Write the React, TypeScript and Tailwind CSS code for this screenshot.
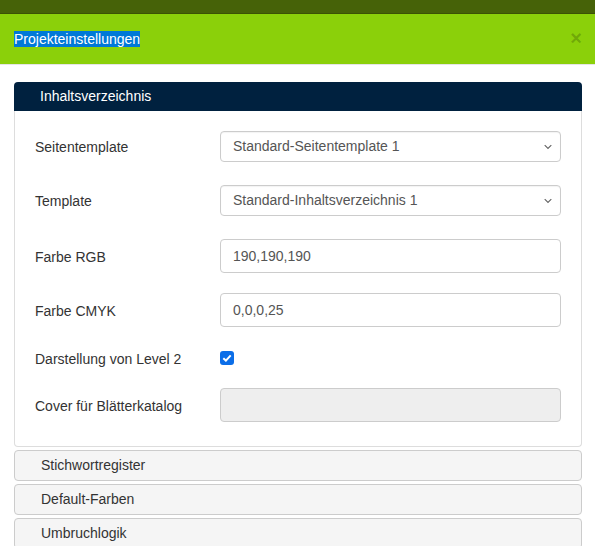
import React from "react";

const Chevron = () => (
  <svg width="8" height="5" viewBox="0 0 8 5" className="absolute right-[8px] top-1/2 -translate-y-1/2 pointer-events-none">
    <path d="M0.7 0.7 L4 4 L7.3 0.7" fill="none" stroke="#666" strokeWidth="1.2" />
  </svg>
);

function SelectBox({ value }: { value: string }) {
  return (
    <div className="relative w-[341px] h-[31px] border border-[#ccc] rounded-[4px] bg-white flex items-center pl-[12px] text-[14px] text-[#555] shadow-[inset_0_1px_1px_rgba(0,0,0,0.05)]">
      {value}
      <Chevron />
    </div>
  );
}

function InputBox({ value, disabled }: { value?: string; disabled?: boolean }) {
  return (
    <div
      className={
        "w-[341px] h-[34px] border border-[#ccc] rounded-[4px] flex items-center pl-[12px] text-[14px] text-[#555] " +
        (disabled ? "bg-[#eeeeee]" : "bg-white")
      }
    >
      {value}
    </div>
  );
}

function Row({ label, children, className }: { label: string; children: React.ReactNode; className?: string }) {
  return (
    <div className={"flex items-center " + (className ?? "")}>
      <div className="w-[185px] text-[14px] text-[#333] pt-[2px]">{label}</div>
      {children}
    </div>
  );
}

function Collapsed({ title }: { title: string }) {
  return (
    <div className="mt-[3px] h-[31px] border border-[#ccc] rounded-[4px] bg-[#f5f5f5] flex items-center pl-[26px] text-[14px] text-[#333]">
      {title}
    </div>
  );
}

export default function App() {
  return (
    <div
      className="w-[595px] h-[546px] overflow-hidden bg-white"
      style={{ fontFamily: '"Liberation Sans", Arial, sans-serif' }}
    >
      <div className="h-[14px] bg-[#466208] border-b border-[#3b5205]" />
      <div className="h-[50px] bg-[#8bd00a] flex items-center justify-between pl-[14px] pr-[13px] border-b border-[#e5e5e5] box-content">
        <span className="bg-[#0078d7] text-white text-[14px] leading-[16px] mt-[-1px]">Projekteinstellungen</span>
        <span className="text-[20px] font-bold leading-none text-black/20 mt-[-2px]">×</span>
      </div>
      <div className="pt-[17px] pl-[14px] pr-[13px]">
        <div className="h-[29px] bg-[#00213f] rounded-t-[4px] flex items-center pl-[26px] text-[14px] text-white">
          Inhaltsverzeichnis
        </div>
        <div className="border border-t-0 border-[#ddd] rounded-b-[4px] pt-[20px] pb-[24px] pl-[20px]">
          <Row label="Seitentemplate" className="h-[31px]">
            <SelectBox value="Standard-Seitentemplate 1" />
          </Row>
          <Row label="Template" className="h-[31px] mt-[23px]">
            <SelectBox value="Standard-Inhaltsverzeichnis 1" />
          </Row>
          <Row label="Farbe RGB" className="h-[34px] mt-[23px]">
            <InputBox value="190,190,190" />
          </Row>
          <Row label="Farbe CMYK" className="h-[34px] mt-[20px]">
            <InputBox value="0,0,0,25" />
          </Row>
          <Row label="Darstellung von Level 2" className="h-[14px] mt-[24px]">
            <div className="w-[14px] h-[14px] rounded-[3px] bg-[#0b6ee8] flex items-center justify-center">
              <svg width="10" height="8" viewBox="0 0 10 8">
                <path d="M1.3 4.2 L3.9 6.6 L8.7 1.4" fill="none" stroke="white" strokeWidth="2" />
              </svg>
            </div>
          </Row>
          <Row label="Cover für Blätterkatalog" className="h-[34px] mt-[23px]">
            <InputBox disabled />
          </Row>
        </div>
        <Collapsed title="Stichwortregister" />
        <Collapsed title="Default-Farben" />
        <Collapsed title="Umbruchlogik" />
      </div>
    </div>
  );
}
